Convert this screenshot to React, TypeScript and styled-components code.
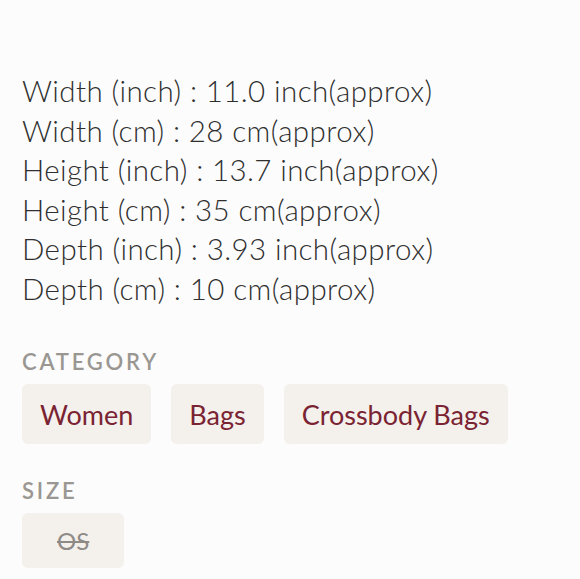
import React from "react";
import styled, { createGlobalStyle } from "styled-components";

const Global = createGlobalStyle`
  html, body { margin: 0; padding: 0; background: #fcfcfc; }
  body { font-family: "Lato", "Open Sans", sans-serif; }
`;

const Page = styled.div`
  padding: 71px 22px 0 22px;
  display: flex;
  flex-direction: column;
`;

const Specs = styled.div`
  display: flex;
  flex-direction: column;
  color: #2f2f2f;
  font-size: 29.5px;
  font-weight: 300;
  letter-spacing: 0.4px;
  line-height: 39.5px;
`;

const Label = styled.div<{ $top: number }>`
  margin-top: ${(p) => p.$top}px;
  color: #9a9792;
  font-size: 22px;
  font-weight: 600;
  letter-spacing: 2.8px;
  line-height: 24px;
`;

const Chips = styled.div`
  display: flex;
  gap: 20px;
  margin-top: 10px;
`;

const Chip = styled.div<{ $disabled?: boolean }>`
  background: #f4f0ec;
  border-radius: 6px;
  padding: 0 ${(p) => (p.$disabled ? 35 : 18)}px;
  height: ${(p) => (p.$disabled ? 55 : 60)}px;
  display: flex;
  align-items: center;
  font-size: ${(p) => (p.$disabled ? 24 : 27)}px;
  color: ${(p) => (p.$disabled ? "#8e8a86" : "#7a2332")};
  text-decoration: ${(p) => (p.$disabled ? "line-through" : "none")};
`;

const specs = [
  "Width (inch) : 11.0 inch(approx)",
  "Width (cm) : 28 cm(approx)",
  "Height (inch) : 13.7 inch(approx)",
  "Height (cm) : 35 cm(approx)",
  "Depth (inch) : 3.93 inch(approx)",
  "Depth (cm) : 10 cm(approx)",
];

export default function App() {
  return (
    <>
      <Global />
      <Page>
        <Specs>
          {specs.map((s) => (
            <div key={s}>{s}</div>
          ))}
        </Specs>
        <Label $top={42}>CATEGORY</Label>
        <Chips>
          <Chip>Women</Chip>
          <Chip>Bags</Chip>
          <Chip>Crossbody Bags</Chip>
        </Chips>
        <Label $top={35}>SIZE</Label>
        <Chips>
          <Chip $disabled>OS</Chip>
        </Chips>
      </Page>
    </>
  );
}
